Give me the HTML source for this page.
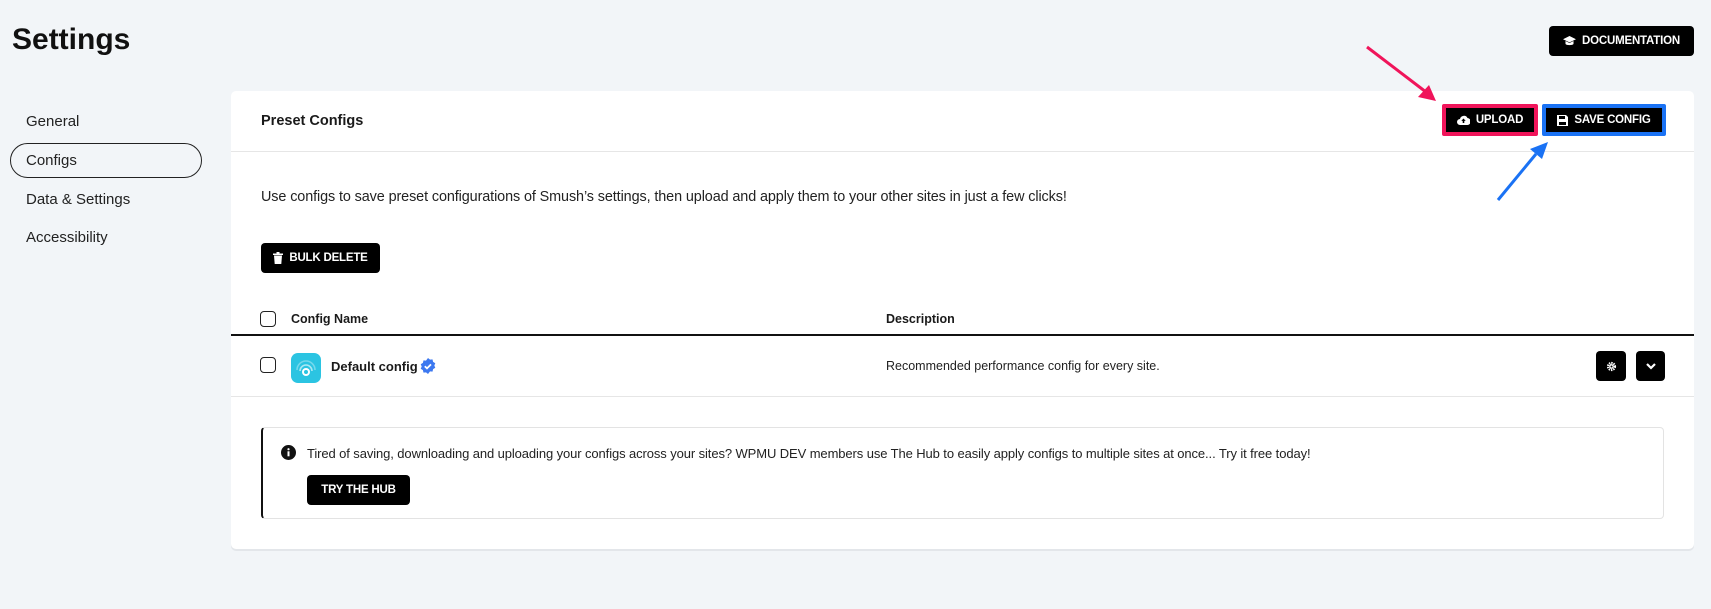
<!DOCTYPE html>
<html><head><meta charset="utf-8"><style>
*{box-sizing:border-box;margin:0;padding:0}
body{width:1711px;height:609px;background:#f2f5f8;font-family:"Liberation Sans",Arial,sans-serif;color:#1a1a1a;position:relative;overflow:hidden}
.a{position:absolute}
.btn{position:absolute;background:#000;color:#fff;font-weight:bold;font-size:11.5px;border-radius:4px;display:flex;align-items:center;justify-content:center;gap:6px;letter-spacing:-0.2px}
.nav{position:absolute;left:26px;font-size:15px;color:#222}
.cb{position:absolute;width:16px;height:16px;border:1.5px solid #222;border-radius:4px;background:#fff}
</style></head><body>
<div class="a" style="left:12px;top:23px;font-size:30px;font-weight:bold;color:#111">Settings</div>
<div class="btn" style="left:1549px;top:26px;width:145px;height:30px;">
<svg width="13" height="11" viewBox="0 0 13 11"><path d="M6.5 0L13 3.2 6.5 6.4 0 3.2z M2.5 5v3c1 1.5 7 1.5 8 0V5L6.5 7z" fill="#fff"/></svg>DOCUMENTATION</div>
<div class="nav" style="top:113px">General</div>
<div class="a" style="left:10px;top:143px;width:192px;height:35px;border:1.3px solid #222;border-radius:18px"></div>
<div class="nav" style="top:152px">Configs</div>
<div class="nav" style="top:191px">Data &amp; Settings</div>
<div class="nav" style="top:229px">Accessibility</div>
<div class="a" style="left:231px;top:91px;width:1463px;height:458px;background:#fff;border-radius:5px;box-shadow:0 2px 0 #e3e6ea"></div>
<div class="a" style="left:261px;top:113px;font-size:14.5px;font-weight:bold">Preset Configs</div>
<div class="a" style="left:231px;top:151px;width:1463px;height:1px;background:#e6e6e6"></div>
<div class="btn" style="left:1442px;top:104px;width:96px;height:32px;border:4px solid #f0145a;border-radius:2px">
<svg width="13" height="10" viewBox="0 0 13 10"><path d="M3 10a3 3 0 010-6 4 4 0 017.5-1A3.5 3.5 0 0110 10z" fill="#fff"/><path d="M6.5 3.5l-2.2 2.4h1.4V8h1.6V5.9h1.4z" fill="#000"/></svg>UPLOAD</div>
<div class="btn" style="left:1542px;top:104px;width:124px;height:32px;border:4px solid #1a72f4;border-radius:2px">
<svg width="11" height="11" viewBox="0 0 11 11"><path d="M0 0h9l2 2v9H0z" fill="#fff"/><rect x="2" y="1" width="6" height="3" fill="#000"/><rect x="2" y="7" width="7" height="3" fill="#000"/></svg>SAVE CONFIG</div>
<svg class="a" style="left:1360px;top:40px" width="200" height="170" viewBox="0 0 200 170">
<line x1="7" y1="7" x2="66" y2="52" stroke="#f0145a" stroke-width="3"/><path d="M76 61L58 57 69 45z" fill="#f0145a"/>
<line x1="138" y1="160" x2="176" y2="114" stroke="#1a72f4" stroke-width="3"/><path d="M188 102L170 109 182 119z" fill="#1a72f4"/>
</svg>
<div class="a" style="left:261px;top:189px;font-size:14.4px;color:#222;letter-spacing:-0.1px">Use configs to save preset configurations of Smush’s settings, then upload and apply them to your other sites in just a few clicks!</div>
<div class="btn" style="left:261px;top:243px;width:119px;height:30px">
<svg width="10" height="12" viewBox="0 0 10 12"><path d="M0 1.5h10v1.5H0zM3.5 0h3v1.5h-3zM1 3.5h8l-.7 8.5H1.7z" fill="#fff"/></svg>BULK DELETE</div>
<div class="cb" style="left:260px;top:311px"></div>
<div class="a" style="left:291px;top:312px;font-size:12.5px;font-weight:bold">Config Name</div>
<div class="a" style="left:886px;top:312px;font-size:12.5px;font-weight:bold">Description</div>
<div class="a" style="left:231px;top:334px;width:1463px;height:2px;background:#111"></div>
<div class="cb" style="left:260px;top:357px"></div>
<div class="a" style="left:291px;top:353px;width:30px;height:30px;border-radius:7px;background:#2bc4e2"></div>
<svg class="a" style="left:291px;top:353px" width="30" height="30" viewBox="0 0 30 30"><circle cx="15" cy="19" r="3" fill="none" stroke="#fff" stroke-width="2"/><path d="M9 18a6 6 0 0112 0" fill="none" stroke="#fff" stroke-opacity=".6" stroke-width="1.6"/><path d="M6 17a9 9 0 0118 0" fill="none" stroke="#fff" stroke-opacity=".35" stroke-width="1.6"/></svg>
<div class="a" style="left:331px;top:359px;font-size:13px;font-weight:bold">Default config</div>
<svg class="a" style="left:420px;top:358px" width="16" height="16" viewBox="0 0 16 16"><path d="M8 0l2 1.6 2.5-.2.6 2.5 2.2 1.3-1 2.3 1 2.3-2.2 1.3-.6 2.5-2.5-.2L8 16l-2-1.6-2.5.2-.6-2.5L.7 10.8l1-2.3-1-2.3L2.9 4.9l.6-2.5 2.5.2z" fill="#3c78f0"/><path d="M4.8 8.2l2.2 2.2 4-4" fill="none" stroke="#fff" stroke-width="1.8"/></svg>
<div class="a" style="left:886px;top:359px;font-size:12.5px;color:#222">Recommended performance config for every site.</div>
<div class="btn" style="left:1596px;top:351px;width:30px;height:30px">
<svg width="11" height="11" viewBox="0 0 12 12"><circle cx="6" cy="6" r="3.8" fill="none" stroke="#fff" stroke-width="2.4" stroke-dasharray="1.5 1"/><circle cx="6" cy="6" r="2.6" fill="#fff"/><circle cx="6" cy="6" r="1.1" fill="#000"/></svg></div>
<div class="btn" style="left:1636px;top:351px;width:29px;height:30px">
<svg width="10" height="7" viewBox="0 0 10 7"><path d="M1 1l4 4 4-4" fill="none" stroke="#fff" stroke-width="2.2"/></svg></div>
<div class="a" style="left:231px;top:396px;width:1463px;height:1px;background:#e6e6e6"></div>
<div class="a" style="left:261px;top:427px;width:1403px;height:92px;border:1px solid #e3e3e3;border-left:2px solid #111;border-radius:4px"></div>
<svg class="a" style="left:281px;top:445px" width="15" height="15" viewBox="0 0 15 15"><circle cx="7.5" cy="7.5" r="7.5" fill="#111"/><rect x="6.5" y="6.3" width="2" height="5" fill="#fff"/><circle cx="7.5" cy="4.2" r="1.1" fill="#fff"/></svg>
<div class="a" style="left:307px;top:446px;font-size:13px;color:#222;letter-spacing:-0.1px">Tired of saving, downloading and uploading your configs across your sites? WPMU DEV members use The Hub to easily apply configs to multiple sites at once... Try it free today!</div>
<div class="btn" style="left:307px;top:475px;width:103px;height:30px">TRY THE HUB</div>
</body></html>
